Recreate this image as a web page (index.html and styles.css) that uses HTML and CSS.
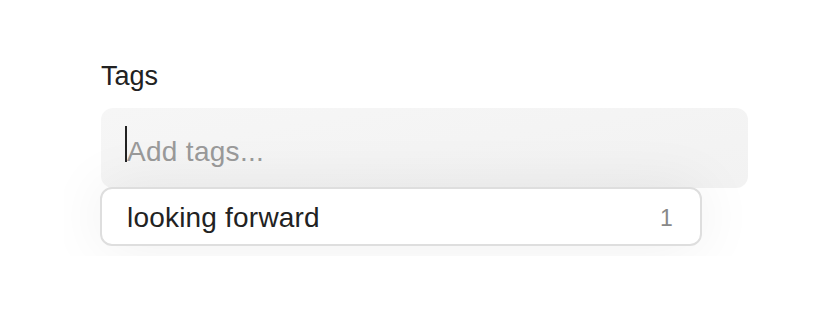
FILE: index.html
```html
<!DOCTYPE html>
<html lang="en">
<head>
    <meta charset="UTF-8">
    <meta name="viewport" content="width=device-width, initial-scale=1.0">
    <title>Tags</title>

    <link rel="stylesheet" href="styles.css">
</head>
<body>

    <div class="panel">
        <label class="field-label">Tags</label>

        <!-- Tag input with suggestion list -->
        <div class="tag-field">
            <div class="tag-input">
                <span class="caret"></span><span class="placeholder">Add tags...</span>
            </div>
            <div class="suggestions">
                <div class="suggestion">
                    <span class="suggestion-name">looking forward</span>
                    <span class="suggestion-count">1</span>
                </div>
            </div>
        </div>
    </div>

</body>
</html>
```

FILE: styles.css
```css
body {
    margin: 0;
    background-color: #ffffff;
    font-family: "Liberation Sans", Arial, sans-serif;
    color: #222222;
}
.panel {
    margin: 62px 28px 0 64px;
    padding: 0 37px;
    height: 194px;
    overflow: hidden;
}
.field-label {
    display: block;
    margin-top: -2px;
    margin-bottom: 16px;
    font-size: 27px;
    line-height: 32px;
}
.tag-field {
    display: flex;
    flex-direction: column;
}
.tag-input {
    display: flex;
    align-items: center;
    height: 80px;
    padding: 0 24px;
    border-radius: 12px;
    background: linear-gradient(170deg, #f6f6f6, #f2f2f2);
    font-size: 28px;
    letter-spacing: 0.3px;
}
.caret {
    align-self: flex-start;
    width: 2px;
    height: 36px;
    margin-top: 18px;
    background-color: #222222;
}
.placeholder {
    color: #9a9a9a;
    line-height: 36px;
    margin-top: 7px;
}
.suggestions {
    width: 602px;
    margin-top: -1px;
    margin-left: -1px;
    border-radius: 12px;
    box-shadow: 0 0 60px rgba(0, 0, 0, 0.07);
}
.suggestion {
    display: flex;
    justify-content: space-between;
    align-items: center;
    height: 52px;
    padding: 3px 27px 0 25px;
    border: 2px solid #dedede;
    border-radius: 12px;
    background-color: #ffffff;
    font-size: 28px;
    letter-spacing: 0.2px;
}
.suggestion-count {
    color: #888888;
    font-size: 23px;
}
```
